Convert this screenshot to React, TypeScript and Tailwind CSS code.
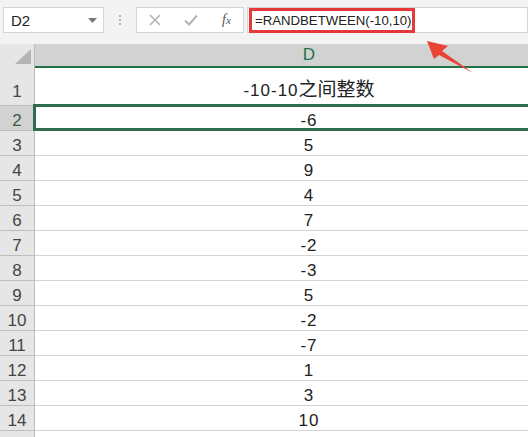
const rows = [
  "",
  "-6",
  "5",
  "9",
  "4",
  "7",
  "-2",
  "-3",
  "5",
  "-2",
  "-7",
  "1",
  "3",
  "10",
  "",
];

const font = { fontFamily: '"Liberation Sans", "Noto Sans CJK SC", sans-serif' };

export default function App() {
  return (
    <div
      className="relative w-[528px] h-[437px] overflow-hidden bg-white text-[#222]"
      style={font}
    >
      {/* formula bar */}
      <div className="h-[44px] bg-[#f3f3f3] flex items-start pt-[7px] pl-[3px]">
        <div className="w-[101px] h-[26px] bg-white border border-[#d6d6d6] flex items-center justify-between pl-[7px] pr-[6px]">
          <span className="text-[15px] leading-none">D2</span>
          <svg width="9" height="5" viewBox="0 0 9 5">
            <path d="M0 0h9L4.5 5z" fill="#7a7a7a" />
          </svg>
        </div>
        <div className="w-[32px] h-[26px] flex flex-col items-center justify-center gap-[2px]">
          <span className="w-[2px] h-[2px] bg-[#b5b5b5]" />
          <span className="w-[2px] h-[2px] bg-[#b5b5b5]" />
          <span className="w-[2px] h-[2px] bg-[#b5b5b5]" />
        </div>
        <div className="w-[108px] h-[26px] bg-white border border-[#d6d6d6] flex items-center pl-[12px]">
          <svg width="12" height="12" viewBox="0 0 12 12">
            <path d="M1 1l10 10M11 1L1 11" stroke="#b3b3b3" strokeWidth="1.6" />
          </svg>
          <svg className="ml-[23px]" width="14" height="12" viewBox="0 0 14 12">
            <path d="M1 6.5l4 4L13 1.5" stroke="#b3b3b3" strokeWidth="2" fill="none" />
          </svg>
          <span
            className="ml-[24px] text-[14px] italic text-[#555] leading-none"
            style={{ fontFamily: '"Liberation Serif", serif' }}
          >
            f<span className="text-[11px]">x</span>
          </span>
        </div>
        <div className="ml-[3px] flex-1 h-[26px] bg-white border border-[#d6d6d6] flex items-end">
          <span className="ml-[1px] mb-[-1px] h-[25px] border-[3px] border-[#e5383b] flex items-center pl-[3px] pr-[1px] text-[13.2px] leading-none">
            =RANDBETWEEN(-10,10)
          </span>
        </div>
      </div>

      {/* column header */}
      <div className="flex h-[24px]">
        <div className="w-[35px] shrink-0 bg-[#e6e6e6] border-r border-[#bdbdbd] flex items-end justify-end pr-[3px] pb-[4px]">
          <svg width="16" height="15" viewBox="0 0 16 15">
            <path d="M16 0v15H0z" fill="#b4b4b4" />
          </svg>
        </div>
        <div className="w-[548px] shrink-0 bg-[#d2d2d2] border-b-2 border-[#217346] flex items-center justify-center text-[17px] text-[#217346]">
          D
        </div>
      </div>

      {/* rows */}
      {rows.map((v, i) => {
        const n = i + 1;
        const sel = n === 2;
        return (
          <div key={n} className={n === 1 ? "flex h-[38px]" : "flex h-[25px]"}>
            <div
              className={
                sel
                  ? "w-[35px] shrink-0 bg-[#d2d2d2] border-r border-b border-[#bdbdbd] flex items-end justify-center pb-[1px] text-[17px] leading-none text-[#2f5e47]"
                  : n === 1
                    ? "w-[35px] shrink-0 bg-[#e6e6e6] border-r border-b border-[#bdbdbd] flex items-end justify-center pb-[5px] text-[17px] leading-none text-[#444]"
                    : "w-[35px] shrink-0 bg-[#e6e6e6] border-r border-b border-[#bdbdbd] flex items-end justify-center pb-[1px] text-[17px] leading-none text-[#444]"
              }
            >
              {n < 15 ? n : ""}
            </div>
            {n === 1 ? (
              <div className="w-[548px] shrink-0 border-b border-[#d4d4d4] flex items-end justify-center pb-[6px] text-[17px] leading-none">
                <span className="tracking-[1px]">-10-10</span>
                <span className="text-[19px]">之间整数</span>
              </div>
            ) : (
              <div className="relative w-[548px] shrink-0 border-b border-[#d4d4d4] flex items-end justify-center pb-[1px] text-[17px] leading-none">
                <span className="tracking-[1px]">{v}</span>
                {sel && (
                  <div className="absolute top-[-2px] left-[-2px] bottom-[-1px] right-[-10px] border-[3px] border-[#2e6b4f]" />
                )}
              </div>
            )}
          </div>
        );
      })}

      {/* annotation arrow */}
      <svg className="absolute left-0 top-0" width="528" height="437" viewBox="0 0 528 437">
        <polygon
          points="427,41 448,46 442,51 473,73 439,55 434,59"
          fill="#ea4335"
        />
      </svg>
    </div>
  );
}
